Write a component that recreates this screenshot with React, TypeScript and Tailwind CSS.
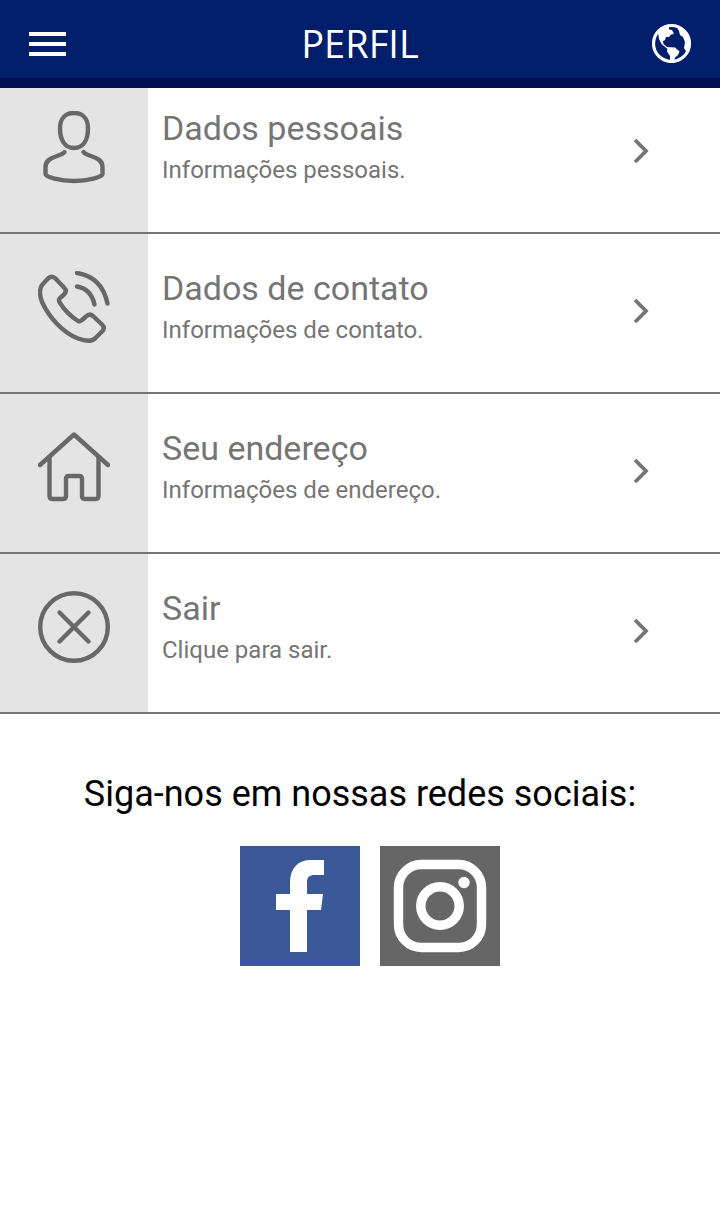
import type { ReactNode } from "react";

type MenuItem = {
	title: string;
	description: string;
	href: string;
	icon: ReactNode;
};

const menuItems: MenuItem[] = [
	{
		title: "Dados pessoais",
		description: "Informações pessoais.",
		href: "#dados-pessoais",
		icon: (
			<>
				<path d="M36 2C27 2 22 8 22 17C22 28 26 37 36 37S50 28 50 17C50 8 45 2 36 2Z" />
				<path d="M26.500 41C23 46 7.500 45 7.500 56V63C7.500 66 22 70 36 70S64.500 66 64.500 63V56C64.500 45 49 46 45.500 41" />
			</>
		),
	},
	{
		title: "Dados de contato",
		description: "Informações de contato.",
		href: "#dados-de-contato",
		icon: (
			<>
				<path d="M10 7.500Q14 4 17.500 7.500L26 16.500Q29.500 20 26 23.500L22 27Q20 29 22 32Q29 43 40 50Q42 51 44 49L48 45.500Q51.500 42 55 45L64 53.500Q67.500 57 64 60.500L57 67.500Q52 72 40 67.500C24 61 11 46 4 31Q0 20 4 14Z" />
				<path d="M39 15.500Q53 18 56.500 33.500" />
				<path d="M39 2Q64 6 69.500 32.500" />
			</>
		),
	},
	{
		title: "Seu endereço",
		description: "Informações de endereço.",
		href: "#seu-endereco",
		icon: (
			<>
				<path d="M2 34L36 3.500L70 34" />
				<path d="M11.500 26V65Q11.500 68 14.500 68H25Q28 68 28 65V48Q28 45 31 45H41Q44 45 44 48V65Q44 68 47 68H57.500Q60.500 68 60.500 65V26" />
			</>
		),
	},
	{
		title: "Sair",
		description: "Clique para sair.",
		href: "#sair",
		icon: (
			<>
				<circle cx="36" cy="36" r="33.800" />
				<path d="M21.500 21.500L50.500 50.500M50.500 21.500L21.500 50.500" />
			</>
		),
	},
];

function Header() {
	return (
		<header className="relative z-10 grid h-22 grid-cols-[1fr_auto_1fr] items-center border-b-10 border-[#000f52] bg-[#001e6a] px-7 pt-2 text-white">
			<button type="button" aria-label="Menu" className="justify-self-start">
				<svg viewBox="0 0 38 26" className="h-[26px] w-[38px]" fill="currentColor" aria-hidden="true">
					<path d="M1 2H38V6H1ZM1 12H38V16H1ZM1 22H38V26H1Z" />
				</svg>
			</button>
			<h1 className="font-['Open_Sans',sans-serif] text-[38px] leading-[52px]">PERFIL</h1>
			<button type="button" aria-label="Idioma" className="justify-self-end">
				<svg viewBox="0 0 40 40" className="size-10" aria-hidden="true">
					<circle cx="19.500" cy="20.500" r="18" fill="none" stroke="currentColor" strokeWidth="3.200" />
					<path fill="currentColor" d="M6 9L12 3L17 3.500L17 6.500L20 7L22 11L19 11.500L17 14L14 14L13 17L11 18L11.500 21L15 24L23 24.500L27.500 28.500L26 32L23 34.500L22 38H18L18 33L15 28.500L15.500 26L9.500 21L7 16Z" />
					<path fill="currentColor" d="M24 3L31 6L37 14L38 23L35 30L32 25L33 19L31 14L28 12L27 8Z" />
				</svg>
			</button>
		</header>
	);
}

function MenuRow({ item }: { item: MenuItem }) {
	return (
		<li className="border-b-2 border-[#757575]">
			<a href={item.href} className="flex min-h-[158px] text-[#757575]">
				<span className="flex w-37 shrink-0 justify-center bg-[#e4e4e4] pt-[37px]">
					<svg viewBox="0 0 72 74" className="h-[74px] w-18" fill="none" stroke="#686868" strokeWidth="4.400" strokeLinecap="round" strokeLinejoin="round" aria-hidden="true">
						{item.icon}
					</svg>
				</span>
				<span className="flex-1 pt-[34px] pl-3.5">
					<span className="block text-[34px] leading-10">{item.title}</span>
					<span className="block text-2xl leading-11">{item.description}</span>
				</span>
				<svg viewBox="0 0 16 24" className="mt-[65px] mr-[71px] h-6 w-4 shrink-0" fill="none" stroke="currentColor" strokeWidth="3.800" aria-hidden="true">
					<path d="M2 1L13 12L2 23" />
				</svg>
			</a>
		</li>
	);
}

function SocialLinks() {
	return (
		<section className="pt-14 text-center text-black">
			<h2 className="text-4xl leading-12">Siga-nos em nossas redes sociais:</h2>
			<div className="mt-7 flex justify-center gap-5 pl-5">
				<a href="#facebook" aria-label="Facebook">
					<svg viewBox="0 0 120 120" className="size-30 bg-[#3b5998]" aria-hidden="true">
						<path fill="white" d="M50 106V64H36V48H50V37C50 22 58 14 71 14H84V29H75C69 29 67 31 67 37V48H83L81 64H67V106Z" />
					</svg>
				</a>
				<a href="#instagram" aria-label="Instagram">
					<svg viewBox="0 0 120 120" className="size-30 bg-[#666]" fill="none" stroke="white" aria-hidden="true">
						<rect x="18.500" y="18.500" width="83" height="83" rx="23" strokeWidth="9.400" />
						<circle cx="60" cy="60" r="19.200" strokeWidth="9.500" />
						<circle cx="84" cy="36.500" r="5.700" fill="white" stroke="none" />
					</svg>
				</a>
			</div>
		</section>
	);
}

export default function App() {
	return (
		<div className="min-h-screen bg-white font-[Roboto,sans-serif]">
			<Header />
			<main>
				{/* the list slides under the header a little */}
				<ul className="-mt-3.5">
					{menuItems.map((item) => (
						<MenuRow key={item.title} item={item} />
					))}
				</ul>
				<SocialLinks />
			</main>
		</div>
	);
}
